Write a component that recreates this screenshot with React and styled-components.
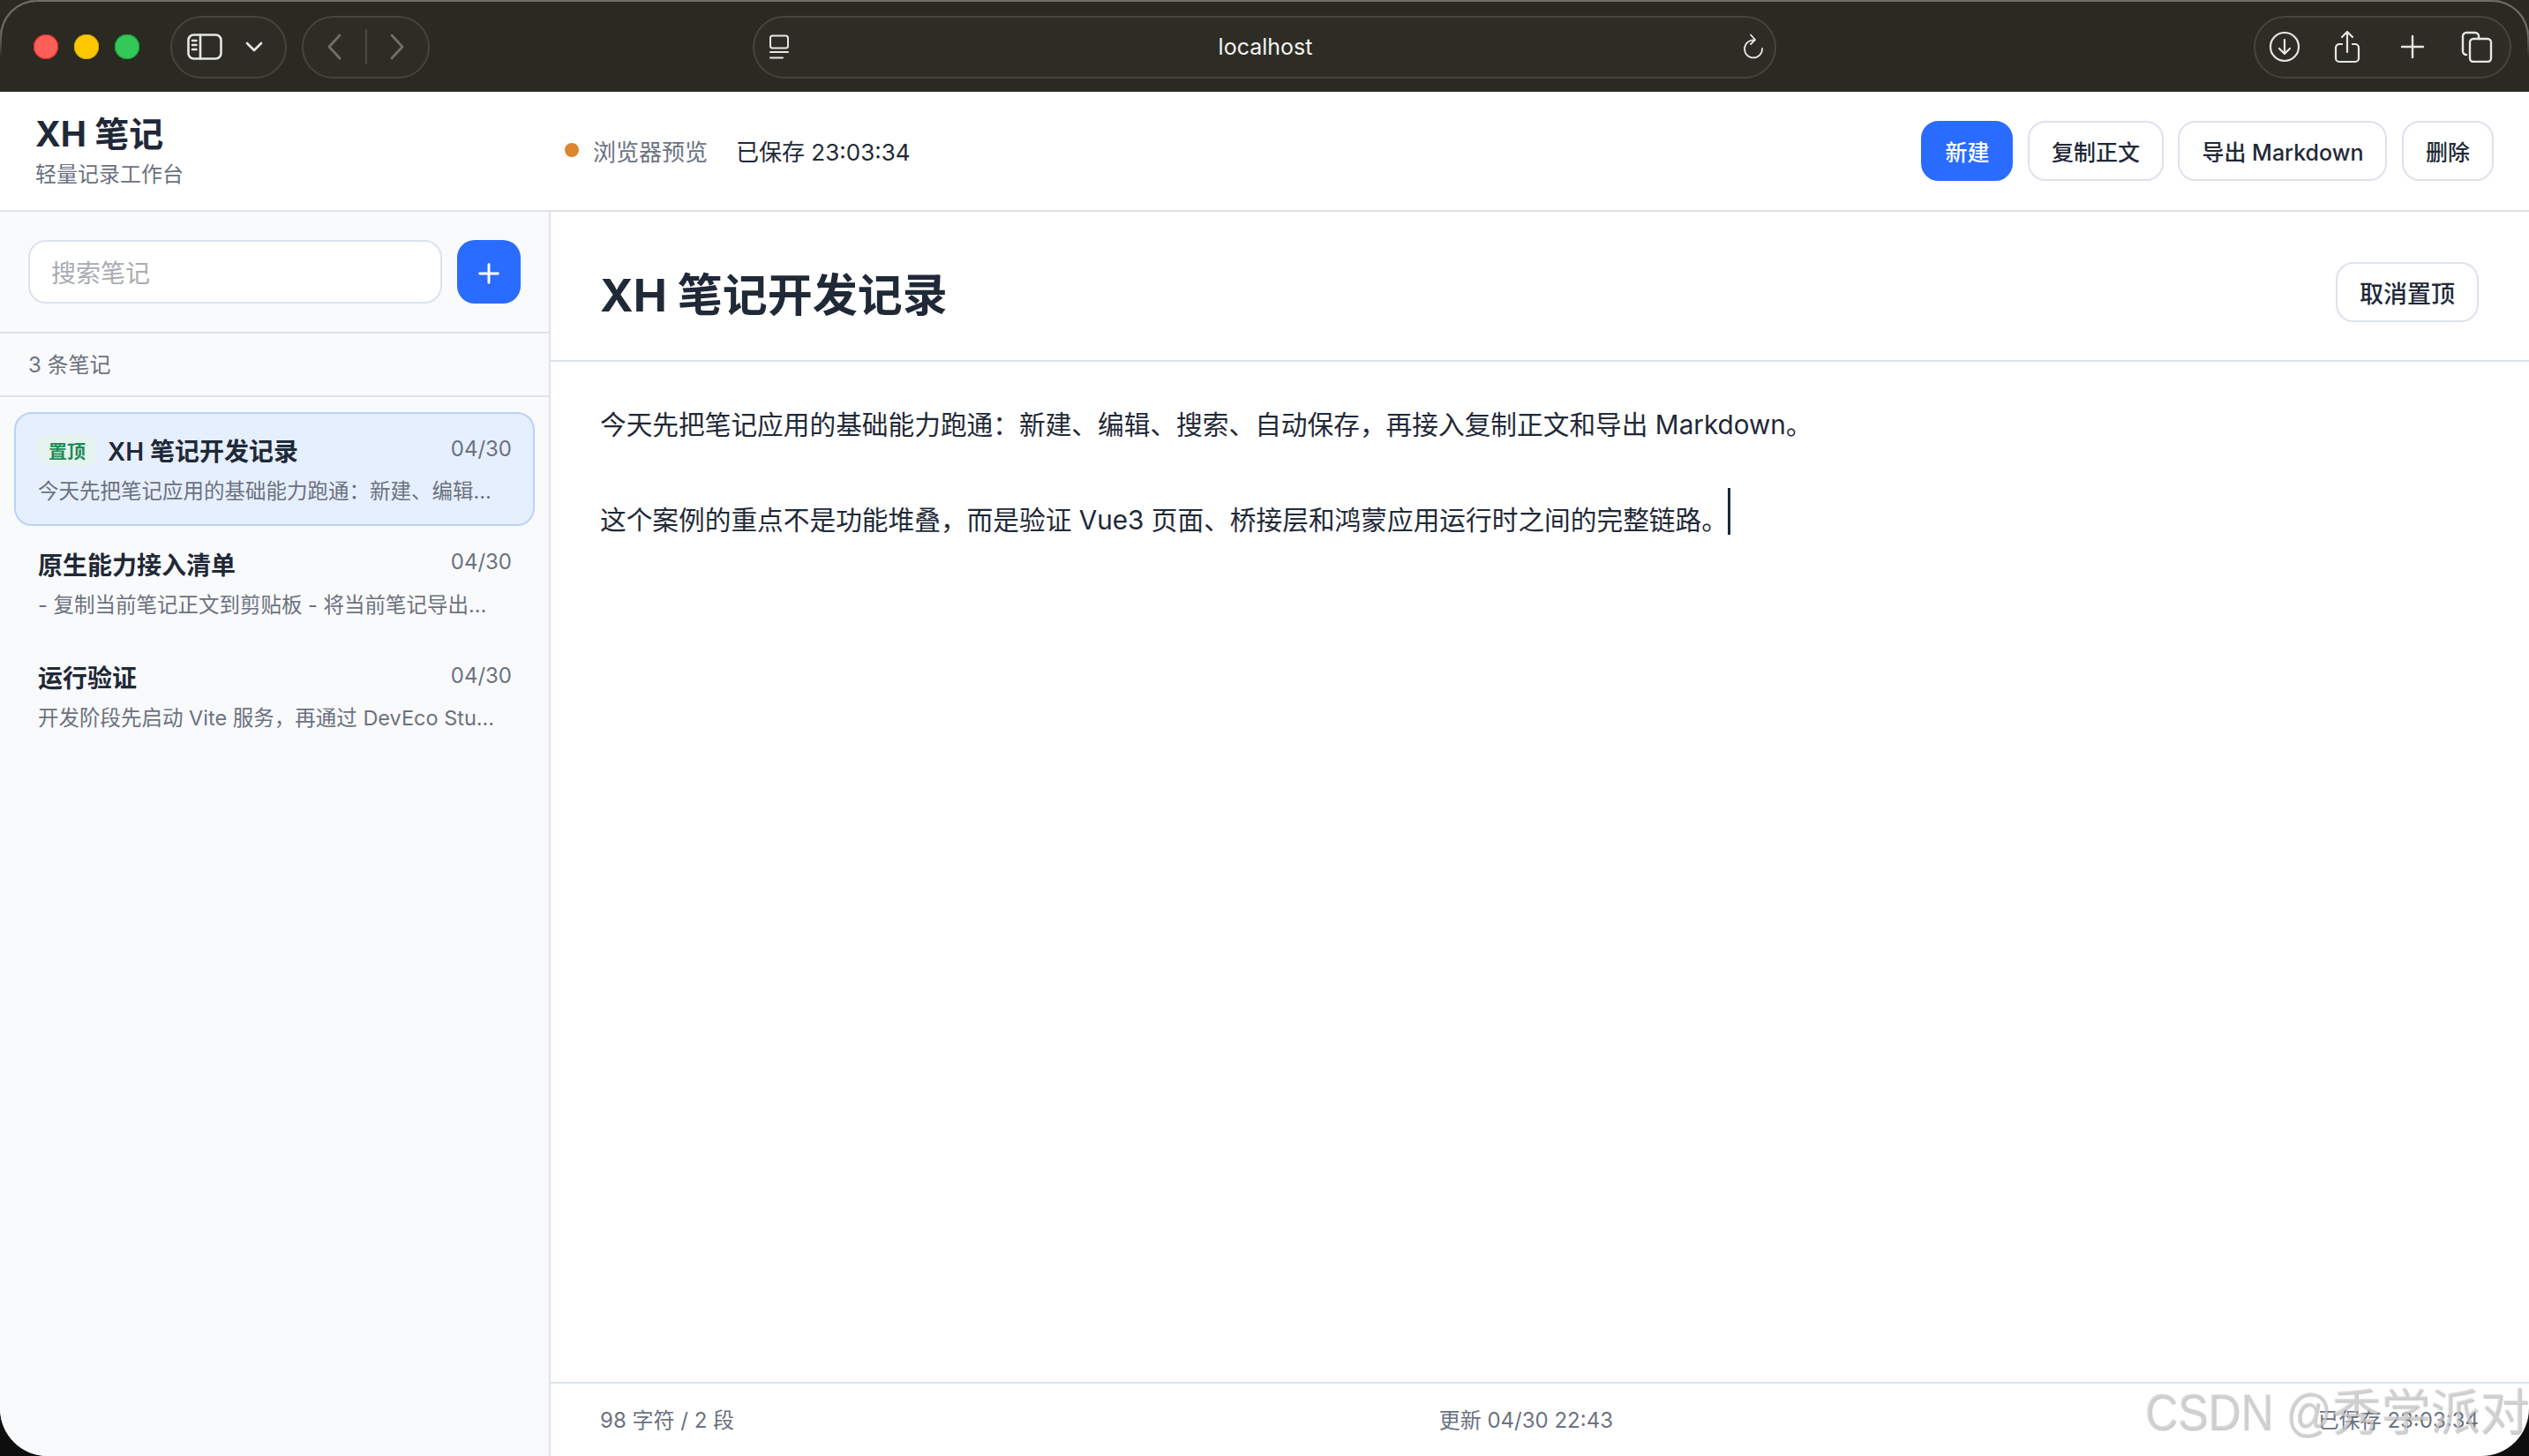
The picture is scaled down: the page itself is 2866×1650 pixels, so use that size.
import React from "react";
import styled, { createGlobalStyle } from "styled-components";

const Global = createGlobalStyle`
  html, body { margin: 0; padding: 0; background: linear-gradient(#2b2a22 50%, #0e0e0e 50%); }
  * { box-sizing: border-box; }
  #root { width: 2866px; height: 1650px; }
`;

const FONT = `Inter, "Noto Sans CJK SC", sans-serif`;
const INK = "#1f2937";
const MUTED = "#6b7280";
const LINE = "#dde2ed";
const BLUE = "#2a6cff";

const Win = styled.div`
  position: relative;
  width: 2866px;
  height: 1650px;
  display: flex;
  flex-direction: column;
  border-radius: 42px 42px 54px 54px;
  overflow: hidden;
  background: #fff;
  font-family: ${FONT};
  color: ${INK};
`;

const Chrome = styled.div`
  position: relative;
  height: 104px;
  flex: none;
  display: grid;
  grid-template-columns: 1fr 1160px 1fr;
  align-items: center;
  padding: 2px 20px 0;
  background: #2b2a22;
  &::before {
    content: "";
    position: absolute;
    inset: 0 0 auto 0;
    height: 64px;
    border: 2px solid #6f6e68;
    border-bottom: 0;
    border-radius: 42px 42px 0 0;
    mask-image: linear-gradient(#000 55%, transparent);
  }
`;
const ChromeLeft = styled.div`
  display: flex;
  align-items: center;
`;
const ChromeRight = styled.div`
  display: flex;
  justify-content: flex-end;
`;
const Lights = styled.div`
  display: flex;
  gap: 18px;
  margin: 0 35px 0 18px;
`;
const Light = styled.span`
  width: 28px;
  height: 28px;
  border-radius: 50%;
  background: ${(p) => p.$c};
  box-shadow: inset 0 0 0 1px ${(p) => p.$e};
`;
const Pill = styled.div`
  height: 71px;
  width: ${(p) => p.$w}px;
  flex: none;
  display: flex;
  align-items: center;
  justify-content: space-between;
  padding: ${(p) => p.$p};
  margin-right: ${(p) => p.$mr || 0}px;
  border: 2px solid #47443a;
  border-radius: 36px;
  background: #2e2d25;
  color: #e6e6e4;
`;
const ShareSlot = styled.span`
  display: flex;
  margin: 0 3px 0 -3px;
`;
const UrlText = styled.span`
  font-size: 25px;
  color: #f4f4f2;
`;
const Divider = styled.span`
  width: 2px;
  height: 40px;
  background: #4a4942;
`;

const Header = styled.header`
  height: 136px;
  flex: none;
  display: flex;
  align-items: center;
  padding: 0 40px;
  border-bottom: 2px solid ${LINE};
`;
const Brand = styled.div`
  width: 600px;
  flex: none;
`;
const BrandName = styled.div`
  font-size: 39px;
  line-height: 48px;
  font-weight: 700;
`;
const BrandSub = styled.div`
  font-size: 24px;
  line-height: 32px;
  margin-top: 6px;
  color: ${MUTED};
`;
const Status = styled.div`
  display: flex;
  align-items: center;
  font-size: 26px;
  margin-top: -2px;
  color: ${MUTED};
`;
const Dot = styled.span`
  width: 16px;
  height: 16px;
  border-radius: 50%;
  background: #dc862f;
  margin-right: 16px;
`;
const Saved = styled.span`
  margin-left: 32px;
  color: ${INK};
`;
const Actions = styled.div`
  margin-left: auto;
  display: flex;
  gap: 16.5px;
`;
const Button = styled.button`
  height: 68px;
  padding: 0 25px;
  font-family: ${FONT};
  font-size: ${(p) => (p.$large ? 27 : 25)}px;
  font-weight: 500;
  color: ${(p) => (p.$primary ? "#fff" : INK)};
  background: ${(p) => (p.$primary ? BLUE : "#fff")};
  border: 2px solid ${(p) => (p.$primary ? BLUE : LINE)};
  border-radius: 20px;
  white-space: nowrap;
`;

const Body = styled.div`
  flex: 1;
  min-height: 0;
  display: flex;
`;
const Sidebar = styled.aside`
  width: 624px;
  flex: none;
  background: #f9fafc;
  border-right: 2px solid ${LINE};
  display: flex;
  flex-direction: column;
`;
const SearchRow = styled.div`
  height: 138px;
  flex: none;
  display: flex;
  gap: 17px;
  padding: 32px 32px 0 32px;
  border-bottom: 2px solid ${LINE};
`;
const Search = styled.div`
  flex: 1;
  height: 72px;
  display: flex;
  align-items: center;
  padding: 0 24px;
  border: 2px solid ${LINE};
  border-radius: 20px;
  background: #fff;
  font-size: 28px;
  color: #a9acb1;
`;
const AddBtn = styled.button`
  width: 72px;
  height: 72px;
  padding: 4px 0 0;
  display: flex;
  align-items: center;
  justify-content: center;
  border: 0;
  border-radius: 20px;
  background: ${BLUE};
`;
const Count = styled.div`
  height: 72px;
  flex: none;
  display: flex;
  align-items: center;
  padding: 0 0 3px 32px;
  font-size: 24px;
  color: ${MUTED};
  border-bottom: 2px solid ${LINE};
`;
const List = styled.div`
  padding: 17px 16px 0 16px;
  display: flex;
  flex-direction: column;
`;
const Card = styled.div`
  height: 128.5px;
  padding: 23px 24px 0 25px;
  border: 2px solid ${(p) => (p.$active ? "#b9d2fb" : "transparent")};
  border-radius: 20px;
  background: ${(p) => (p.$active ? "#e6effe" : "transparent")};
`;
const CardTop = styled.div`
  display: flex;
  align-items: center;
  height: 36px;
`;
const Tag = styled.span`
  height: 35px;
  width: 66px;
  flex: none;
  display: flex;
  align-items: center;
  justify-content: center;
  border-radius: 10px;
  background: #e6f3ee;
  color: #1f8a56;
  font-size: 21px;
  font-weight: 700;
  margin-right: 13px;
`;
const CardTitle = styled.span`
  font-size: 28px;
  font-weight: 600;
  white-space: nowrap;
`;
const CardDate = styled.span`
  margin-left: auto;
  margin-top: -4px;
  font-size: 24px;
  color: ${MUTED};
`;
const Preview = styled.div`
  margin-top: 13px;
  width: 530px;
  font-size: 23.5px;
  line-height: 32px;
  color: ${MUTED};
  white-space: nowrap;
  overflow: hidden;
  text-overflow: ellipsis;
`;

const Main = styled.main`
  flex: 1;
  min-width: 0;
  display: flex;
  flex-direction: column;
`;
const TitleBar = styled.div`
  height: 170px;
  flex: none;
  display: flex;
  align-items: center;
  justify-content: space-between;
  padding: 14px 57px 0 56px;
  border-bottom: 2px solid ${LINE};
`;
const NoteTitle = styled.h1`
  margin: 0;
  font-size: 51px;
  font-weight: 700;
`;
const Editor = styled.div`
  flex: 1;
  padding: 44px 56px 0;
  font-size: 29.7px;
  line-height: 54px;
`;
const Para = styled.p`
  margin: 0 0 54px;
`;
const Caret = styled.span`
  display: inline-block;
  width: 3px;
  height: 53px;
  margin: -20px 0 -20px 0;
  vertical-align: 14px;
  background: ${INK};
`;
const Footer = styled.footer`
  height: 84px;
  flex: none;
  display: flex;
  justify-content: space-between;
  align-items: center;
  padding: 0 57px 3px 56px;
  border-top: 2px solid ${LINE};
  font-size: 24px;
  color: ${MUTED};
`;
const Watermark = styled.div`
  position: absolute;
  right: 0;
  bottom: 14px;
  display: flex;
  align-items: baseline;
  font-family: "Liberation Sans", "Noto Sans CJK SC", sans-serif;
  font-size: 56px;
  white-space: nowrap;
  color: rgba(214, 214, 214, 0.62);
  text-shadow: 1px 1px 1px rgba(110, 110, 110, 0.4);
  pointer-events: none;
`;
const WatermarkLatin = styled.span`
  font-size: 58px;
  display: inline-block;
  transform: scaleX(0.885);
  transform-origin: right bottom;
  white-space: pre;
`;

const stroke = { fill: "none", stroke: "currentColor", strokeLinecap: "round", strokeLinejoin: "round" };

const SidebarIcon = () => (
  <svg width="40" height="30" viewBox="0 0 40 30" {...stroke} strokeWidth="2.6">
    <rect x="1.5" y="1.5" width="37" height="27" rx="6" />
    <path d="M15 1.5v27M6 8h4.5M6 13h4.5M6 18h4.5" />
  </svg>
);
const Chevron = () => (
  <svg width="20" height="12" viewBox="0 0 20 12" {...stroke} strokeWidth="2.6">
    <path d="M2 2l8 8 8-8" />
  </svg>
);
const Arrow = ({ flip }) => (
  <svg width="20" height="32" viewBox="0 0 20 32" {...stroke} strokeWidth="2.8" color="#6f6f69" style={flip ? { transform: "scaleX(-1)" } : undefined}>
    <path d="M16 3L4 16l12 13" />
  </svg>
);
const TabIcon = () => (
  <svg width="24" height="28" viewBox="0 0 24 28" {...stroke} strokeWidth="2">
    <rect x="2" y="1.5" width="20" height="14" rx="2.5" />
    <path d="M2 20h20M2 26.5h14" />
  </svg>
);
const Reload = () => (
  <svg width="26" height="30" viewBox="0 0 26 30" {...stroke} strokeWidth="1.8">
    <path d="M15 7.5A10 10 0 1 0 24 17M11 1.5l5 5.5-5 5" />
  </svg>
);
const Download = () => (
  <svg width="36" height="36" viewBox="0 0 36 36" {...stroke} strokeWidth="2.2">
    <circle cx="18" cy="18" r="16" />
    <path d="M18 10v16M12 20l6 6 6-6" />
  </svg>
);
const Share = () => (
  <svg width="30" height="38" viewBox="0 0 30 38" {...stroke} strokeWidth="2.2">
    <path d="M9 16H6a4 4 0 0 0-4 4v12a4 4 0 0 0 4 4h18a4 4 0 0 0 4-4V20a4 4 0 0 0-4-4h-3M15 25V2M9 8l6-6 6 6" />
  </svg>
);
const Plus = ({ size = 28, color = "currentColor", w = 2.4 }) => (
  <svg width={size} height={size} viewBox="0 0 28 28" {...stroke} strokeWidth={w} color={color}>
    <path d="M14 2v24M2 14h24" />
  </svg>
);
const Tabs = () => (
  <svg width="36" height="36" viewBox="0 0 36 36" {...stroke} strokeWidth="2.4">
    <rect x="10" y="9" width="24" height="26" rx="4" />
    <path d="M6 27a4 4 0 0 1-4-4V6a4 4 0 0 1 4-4h10a4 4 0 0 1 4 4v3" />
  </svg>
);

const notes = [
  { id: 1, title: "XH 笔记开发记录", preview: "今天先把笔记应用的基础能力跑通：新建、编辑、搜索、自动保存，再接入复制正文和导出 Markdown。", pinned: true },
  { id: 2, title: "原生能力接入清单", preview: "- 复制当前笔记正文到剪贴板 - 将当前笔记导出为 Markdown 文件" },
  { id: 3, title: "运行验证", preview: "开发阶段先启动 Vite 服务，再通过 DevEco Studio 运行鸿蒙应用" },
];

export default function App() {
  return (
    <Win>
      <Global />
      <Chrome>
        <ChromeLeft>
          <Lights>
            <Light $c="#ff5f57" $e="#e0242b" />
            <Light $c="#fdc800" $e="#dba800" />
            <Light $c="#34c759" $e="#14a83a" />
          </Lights>
          <Pill $w={132} $mr={17} $p="0 25px 0 17px">
            <SidebarIcon />
            <Chevron />
          </Pill>
          <Pill $w={145} $p="0 25px 0 25px">
            <Arrow />
            <Divider />
            <Arrow flip />
          </Pill>
        </ChromeLeft>
        <Pill $w={1160} $p="0 12px 0 16px">
          <TabIcon />
          <UrlText>localhost</UrlText>
          <Reload />
        </Pill>
        <ChromeRight>
          <Pill $w={292} $p="0 19px 0 15px">
            <Download />
            <ShareSlot>
              <Share />
            </ShareSlot>
            <Plus />
            <Tabs />
          </Pill>
        </ChromeRight>
      </Chrome>

      <Header>
        <Brand>
          <BrandName>XH 笔记</BrandName>
          <BrandSub>轻量记录工作台</BrandSub>
        </Brand>
        <Status>
          <Dot />
          浏览器预览
          <Saved>已保存 23:03:34</Saved>
        </Status>
        <Actions>
          <Button $primary>新建</Button>
          <Button>复制正文</Button>
          <Button>导出 Markdown</Button>
          <Button>删除</Button>
        </Actions>
      </Header>

      <Body>
        <Sidebar>
          <SearchRow>
            <Search>搜索笔记</Search>
            <AddBtn aria-label="新建">
              <Plus size={24} color="#fff" w={3.4} />
            </AddBtn>
          </SearchRow>
          <Count>3 条笔记</Count>
          <List>
            {notes.map((n) => (
              <Card key={n.id} $active={n.pinned}>
                <CardTop>
                  {n.pinned && <Tag>置顶</Tag>}
                  <CardTitle>{n.title}</CardTitle>
                  <CardDate>04/30</CardDate>
                </CardTop>
                <Preview>{n.preview}</Preview>
              </Card>
            ))}
          </List>
        </Sidebar>
        <Main>
          <TitleBar>
            <NoteTitle>XH 笔记开发记录</NoteTitle>
            <Button $large>取消置顶</Button>
          </TitleBar>
          <Editor>
            <Para>今天先把笔记应用的基础能力跑通：新建、编辑、搜索、自动保存，再接入复制正文和导出 Markdown。</Para>
            <Para>
              这个案例的重点不是功能堆叠，而是验证 Vue3 页面、桥接层和鸿蒙应用运行时之间的完整链路。
              <Caret />
            </Para>
          </Editor>
          <Footer>
            <span>98 字符 / 2 段</span>
            <span>更新 04/30 22:43</span>
            <span>已保存 23:03:34</span>
          </Footer>
        </Main>
      </Body>
      <Watermark>
        <WatermarkLatin>CSDN @</WatermarkLatin>
        <span>秀学派对</span>
      </Watermark>
    </Win>
  );
}
